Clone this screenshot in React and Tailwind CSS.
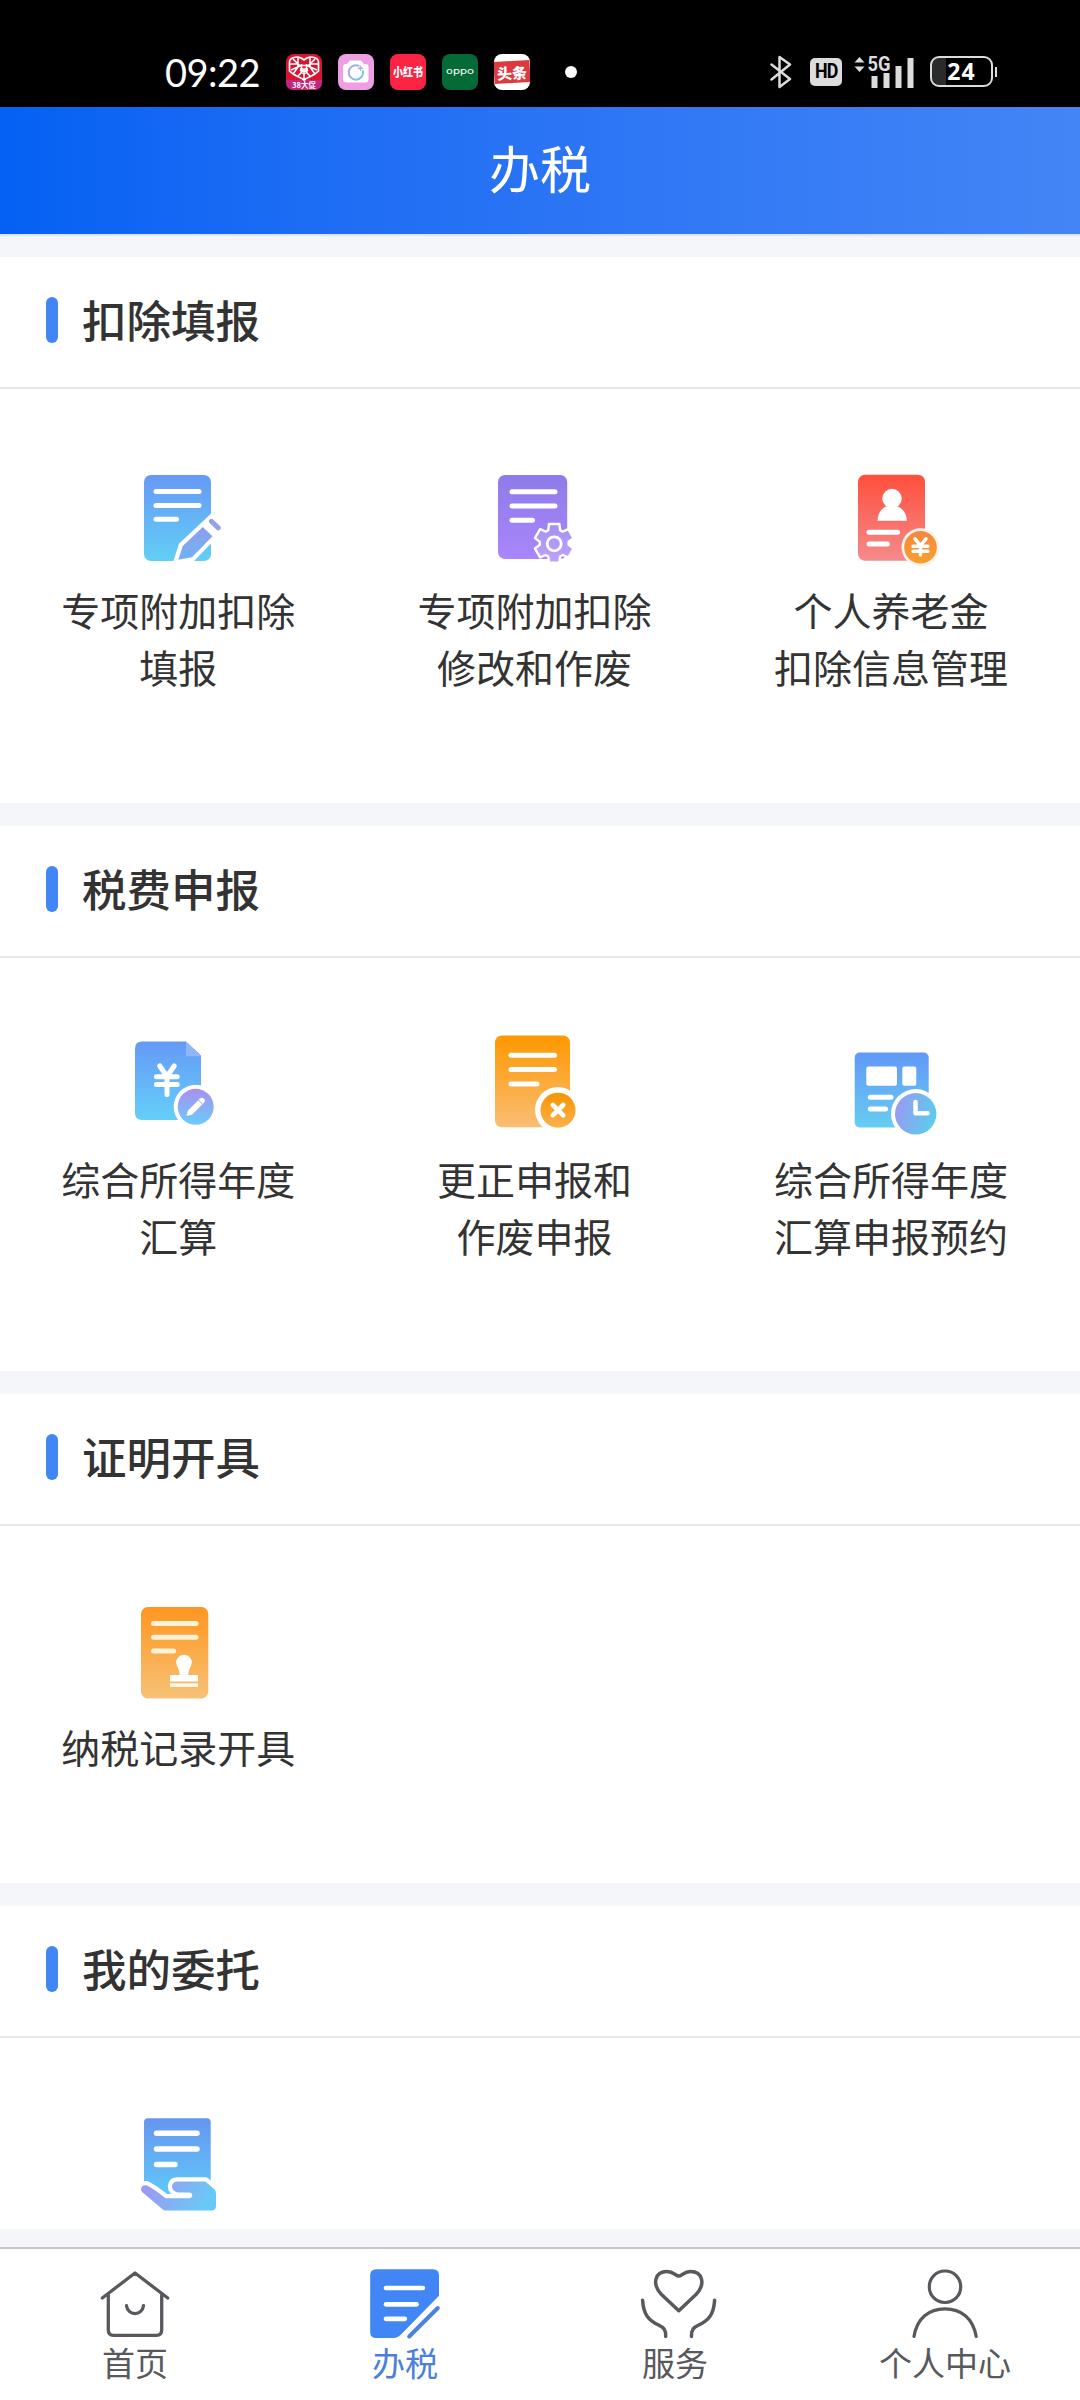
import React from 'react'

const Lines = ({ rows, color = '#fff', width = 5 }) => (
  <g stroke={color} strokeWidth={width} strokeLinecap="round">
    {rows.map(([x1, x2, y]) => (
      <path key={y} d={`M${x1} ${y}H${x2}`} />
    ))}
  </g>
)

const Gradient = ({ id, from, to, diagonal }) => (
  <linearGradient id={id} x1="0" y1="0" x2={diagonal ? '1' : '0'} y2={diagonal ? '0.3' : '1'}>
    <stop offset="0" stopColor={from} />
    <stop offset="1" stopColor={to} />
  </linearGradient>
)

const Icon = ({ children }) => (
  <svg className="w-[120px] h-[120px] overflow-visible" viewBox="0 0 120 120" fill="none">
    {children}
  </svg>
)

const FillReportIcon = () => (
  <Icon>
    <Gradient id="fill" from="#6699f6" to="#62cff5" />
    <Gradient id="pencil" from="#8f9eec" to="#6eb4f3" />
    <rect x="26" y="15" width="67" height="86" rx="7" fill="url(#fill)" />
    <Lines rows={[[38, 81, 31.5], [38, 81, 45.5], [38, 58.5, 59.3]]} />
    <path d="M60.3 99.8L64.7 86 93 59.5 101 69 74 97.2Z" fill="#fff" stroke="#fff" strokeWidth="8.5" />
    <path d="M60.3 99.8L64.7 86 84.8 67 94.5 76.3 74 97.2Z" fill="url(#pencil)" />
    <path d="M93.3 61.3L100.3 67.9" stroke="#9a9feb" strokeWidth="5" strokeLinecap="round" />
  </Icon>
)

const gearPoints = [0, 60, 120, 180, 240, 300]
  .flatMap(a => [[a - 24, 14.5], [a - 15, 20], [a + 15, 20], [a + 24, 14.5]])
  .map(([a, r]) => {
    const t = (a * Math.PI) / 180
    return `${(79.2 + r * Math.sin(t)).toFixed(1)},${(83.3 - r * Math.cos(t)).toFixed(1)}`
  })
  .join(' ')

const ModifyIcon = () => (
  <Icon>
    <Gradient id="modify" from="#8f7bea" to="#a986fb" />
    <Gradient id="gear" from="#a291f1" to="#bfa2fd" />
    <rect x="23" y="15" width="69.2" height="84" rx="7" fill="url(#modify)" />
    <Lines rows={[[37, 80, 31.7], [37, 80, 46], [37, 57.5, 60.3]]} />
    <polygon points={gearPoints} fill="url(#gear)" stroke="#fff" strokeWidth="2.4" strokeLinejoin="round" />
    <circle cx="79.2" cy="83.8" r="7" stroke="#fff" strokeWidth="2.8" />
  </Icon>
)

const PensionIcon = () => (
  <Icon>
    <Gradient id="pension" from="#ff4f3b" to="#f48b8c" />
    <Gradient id="coin" from="#f4873f" to="#fb9f2c" />
    <rect x="27" y="14.7" width="67" height="86" rx="7" fill="url(#pension)" />
    <circle cx="61" cy="38.5" r="9.7" fill="#fff" />
    <path d="M46.6 60.7C46.8 53 50.5 48.5 55.5 46.3H66.5C71.5 48.5 75.5 53 75.8 60.7Z" fill="#fff" />
    <Lines rows={[[38, 66.5, 72.3], [38, 56.3, 84]]} />
    <circle cx="89.5" cy="87.3" r="19" fill="#fff5ec" />
    <circle cx="89.5" cy="87.3" r="16.3" fill="url(#coin)" />
    <path d="M84 78.8L89.5 85.5 95 78.8M89.5 85.5V95M82 86.3H97M82 91.3H97" stroke="#fff" strokeWidth="3.4" strokeLinecap="round" />
  </Icon>
)

const AnnualIcon = () => (
  <Icon>
    <Gradient id="annual" from="#6599f7" to="#65cff8" />
    <Gradient id="annualBadge" from="#ab8eef" to="#68cdf9" />
    <path d="M24 12.5H68L83 26.5V91H24Q17 91 17 84V19.5Q17 12.5 24 12.5Z" fill="url(#annual)" />
    <path d="M68 12.5L83 27.2H68Z" fill="#8fb6fb" />
    <path d="M41.8 37L49 47.5 56.2 37M49 47.5V65.5M38.5 47.7H59.2M38.5 55.4H59.2" stroke="#fff" strokeWidth="5" strokeLinecap="round" />
    <circle cx="77.7" cy="77.8" r="22" fill="#fff" />
    <circle cx="77.7" cy="77.8" r="18" fill="url(#annualBadge)" />
    <path d="M68.5 87L70 81.5 82 69.5Q84 67.8 86 69.8T86 73.8L74 85.8Z" fill="#fff" />
    <path d="M80.5 71L84.6 75.2" stroke="#a99bf0" strokeWidth="1" />
  </Icon>
)

const CorrectIcon = () => (
  <Icon>
    <Gradient id="correct" from="#ff9800" to="#fabd74" />
    <Gradient id="correctBadge" from="#f79400" to="#fcb14c" />
    <rect x="20" y="6.5" width="75" height="91.7" rx="7" fill="url(#correct)" />
    <Lines rows={[[36, 79.5, 26.3], [36, 79.5, 40.6], [36, 62, 54.9]]} />
    <circle cx="83" cy="81" r="23" fill="#fff" />
    <circle cx="83" cy="81.2" r="17.5" fill="url(#correctBadge)" />
    <path d="M77.8 76L88.2 86.4M88.2 76L77.8 86.4" stroke="#fff" strokeWidth="4.6" strokeLinecap="round" />
  </Icon>
)

const BookingIcon = () => (
  <Icon>
    <Gradient id="booking" from="#6298f8" to="#66cdf2" />
    <Gradient id="clock" from="#a095f2" to="#5fc9ee" diagonal />
    <rect x="23.7" y="23.5" width="74" height="75" rx="5" fill="url(#booking)" />
    <rect x="35.3" y="37.5" width="30.7" height="19.3" rx="2" fill="#fff" />
    <rect x="71.3" y="37.5" width="14" height="19.3" rx="2" fill="#fff" />
    <Lines rows={[[39.3, 60, 68.2], [39.3, 54.5, 80]]} />
    <circle cx="84.7" cy="84.8" r="24.7" fill="#fff" />
    <circle cx="84.7" cy="84.8" r="20.7" fill="url(#clock)" />
    <path d="M84.5 73V84.3H96.5" stroke="#fff" strokeWidth="4.5" strokeLinecap="round" strokeLinejoin="round" />
  </Icon>
)

const RecordIcon = () => (
  <Icon>
    <Gradient id="record" from="#ff9620" to="#f7c176" />
    <rect x="23" y="10" width="67.3" height="91.5" rx="7" fill="url(#record)" />
    <Lines rows={[[35.5, 78, 26.5], [35.5, 78, 40.3], [35.5, 55.5, 54]]} color="#fff3d6" />
    <path d="M58.2 65.5A7.8 7.8 0 1 1 73.8 65.5C73.8 70 70.3 71 70.3 78H80V84.5H52V78H61.7C61.7 71 58.2 70 58.2 65.5Z" fill="#fff" />
    <rect x="52" y="86.3" width="28" height="3.7" fill="#fff8e8" />
  </Icon>
)

const palm =
  'M423 866Q424 853 438 854Q448 855 497 893H570Q577 890 577 884T570 876H535Q516 872 516 857Q518 843 532 843H616L644 867Q648 872 648 880V916Q648 930 634 930H492L428 876Q423 872 423 866Z'

const EntrustIcon = () => (
  <Icon>
    <Gradient id="entrust" from="#6695f0" to="#60c9f8" />
    <Gradient id="hand" from="#a592f0" to="#68c9f6" diagonal />
    <path d="M30 9.2H88.7Q92.7 9.2 92.7 13.2V75L84 88H50L26 74V13.2Q26 9.2 30 9.2Z" fill="url(#entrust)" />
    <Lines rows={[[38.5, 79, 24.3], [38.5, 79, 40], [38.5, 57, 55.6]]} width={5.5} />
    <g transform="translate(-118 -208.5) scale(.33333)">
      <path d={palm} stroke="#fff" strokeWidth="25" strokeLinejoin="round" />
      <path d={palm} fill="url(#hand)" />
    </g>
  </Icon>
)

const sections = [
  {
    title: '扣除填报',
    items: [
      { icon: FillReportIcon, label: ['专项附加扣除', '填报'] },
      { icon: ModifyIcon, label: ['专项附加扣除', '修改和作废'] },
      { icon: PensionIcon, label: ['个人养老金', '扣除信息管理'] },
    ],
  },
  {
    title: '税费申报',
    items: [
      { icon: AnnualIcon, label: ['综合所得年度', '汇算'] },
      { icon: CorrectIcon, label: ['更正申报和', '作废申报'] },
      { icon: BookingIcon, label: ['综合所得年度', '汇算申报预约'] },
    ],
  },
  {
    title: '证明开具',
    items: [{ icon: RecordIcon, label: ['纳税记录开具'] }],
  },
  {
    title: '我的委托',
    items: [{ icon: EntrustIcon, label: [] }],
  },
]

const Section = ({ title, items }) => (
  <section className="bg-white shrink-0">
    <div className="h-[132px] border-b-2 border-[#e8e8ea] flex items-center pl-[46px]">
      <span className="w-3 h-[46px] mb-1 rounded-full bg-[#4285f4]"></span>
      <h2 className="ml-6 pb-[5px] text-[44.5px] leading-none font-medium text-[#333]">{title}</h2>
    </div>
    <div className="flex pt-[71px] pb-[107.5px]">
      {items.map(({ icon: ItemIcon, label }, i) => (
        <div key={i} className="w-[356.4px] flex flex-col items-center gap-px">
          <ItemIcon />
          <div className="text-[39px] leading-[57px] text-[#333] text-center">
            {label.map(line => (
              <p key={line}>{line}</p>
            ))}
          </div>
        </div>
      ))}
    </div>
  </section>
)

const StatusBar = () => (
  <div className="h-[107px] bg-black text-white flex items-center pt-[38px] pb-0.5 pl-[165px] shrink-0">
    <span className="w-[121px] font-['Lato'] text-[38px] leading-none tracking-[-0.5px]">09:22</span>
    <div className="flex gap-4">
      <svg className="w-9 h-9 overflow-visible" viewBox="0 0 36 36">
        <rect width="36" height="36" rx="8" fill="#d7152f" />
        <path d="M0 26H36V28Q36 36 28 36H8Q0 36 0 28Z" fill="#c4267f" />
        <path d="M18 6C14 2 4 2 3.500 8V17C8 22 14 23 18 26C22 23 28 22 32.500 17V8C32 2 22 2 18 6Z" fill="#d7152f" stroke="#fff" strokeWidth="1.700" />
        <path d="M7 5L14 12 5 16M12 4V13L7 20M29 5L22 12 31 16M24 4V13L29 20M14 16L18 20 22 16M12 22L18 16 24 22M15.500 10V17M20.500 10V17M14 11.500H22M14 15H22M4 10H12M24 10H32M18 18V25" stroke="#fff" strokeWidth="1.600" fill="none" />
        <text x="18" y="34" textAnchor="middle" fontSize="7.500" fill="#fff" fontWeight="700">38大促</text>
      </svg>
      <svg className="w-9 h-9" viewBox="0 0 36 36" fill="none">
        <Gradient id="lens" from="#b5a3e8" to="#70cbd6" diagonal />
        <rect width="36" height="36" rx="8" fill="#ee9fe3" />
        <path d="M9 10L12 6.500H23L26 10H27.500Q30.500 10 30.500 13V25Q30.500 28.500 27 28.500H8.500Q5 28.500 5 25V13Q5 10 8 10Z" fill="#fff" />
        <path d="M20.500 11.700A7.200 7.200 0 1 0 25 17" stroke="url(#lens)" strokeWidth="2" strokeLinecap="round" />
        <path d="M22.500 11L23.500 13.300 26 14.300 23.500 15.300 22.500 17.600 21.500 15.300 19 14.300 21.500 13.300Z" fill="#c9a7dc" />
      </svg>
      <div className="w-9 h-9 rounded-lg bg-[#fd2343] flex items-center justify-center text-[10px] leading-none font-black whitespace-nowrap">
        <span className="scale-y-120">小红书</span>
      </div>
      <svg className="w-9 h-9 overflow-visible" viewBox="0 0 36 36" fill="none">
        <rect width="36" height="36" rx="8" fill="#046a36" />
        <text x="4" y="19.500" fontFamily="Inter" fontSize="9" textLength="28" lengthAdjust="spacingAndGlyphs" fill="#fff">oppo</text>
      </svg>
      <div className="w-9 h-9 rounded-lg bg-white flex items-center overflow-hidden">
        <div className="w-9 h-[22px] -rotate-3 bg-[#dd3a40] flex items-center justify-center text-[15px] leading-none font-black whitespace-nowrap">头条</div>
      </div>
    </div>
    <span className="w-3 h-3 ml-[35px] rounded-full bg-white"></span>
    <svg className="w-[22px] h-[34px] ml-[193px]" viewBox="0 0 22 34" fill="none">
      <path d="M1.500 9.500L20 24 9.500 32V2L20 9.500 1.500 24.500" stroke="#dcdcdc" strokeWidth="2.500" strokeLinejoin="round" strokeLinecap="round" />
    </svg>
    <span className="w-8 h-7 ml-[18px] rounded-[5px] bg-[#dcdcdc] text-black flex items-center justify-center font-['Roboto'] text-[21px] leading-none font-bold tracking-[-1px]">
      <span className="scale-x-85">HD</span>
    </span>
    <svg className="w-[60px] h-8 ml-3 overflow-visible" viewBox="0 0 60 32" fill="#dcdcdc">
      <path d="M5.500 1L10.500 6.500H.5ZM5.500 16L10.500 10.500H.5Z" />
      <text x="13.500" y="15" fontFamily="Roboto" fontSize="20" fontWeight="700" textLength="23" lengthAdjust="spacingAndGlyphs">5G</text>
      <path d="M17.500 20H23.500V32H17.500ZM29.500 17H35.500V32H29.500ZM41.500 10H47.500V32H41.500ZM53.500 2H59.500V32H53.500Z" />
    </svg>
    <div className="ml-4 flex items-center">
      <div className="w-[63px] h-[31px] rounded-[9px] border-2 border-[#dcdcdc] bg-[linear-gradient(to_right,#2b2b2b_24%,#000_24%)] flex items-center justify-center font-['Open_Sans'] text-[23px] leading-none font-bold tracking-[1px]">24</div>
      <span className="w-0.5 h-2.5 ml-0.5 bg-[#dcdcdc]"></span>
    </div>
  </div>
)

const tabs = [
  {
    name: '首页',
    icon: (
      <g stroke="#58585d" strokeWidth="3.3" strokeLinecap="round" strokeLinejoin="round">
        <path d="M12.3 38L45 13 77.7 38M18.3 35V70Q18.3 75.3 23.5 75.3H66.5Q71.7 75.3 71.7 70V35" />
        <path d="M36.5 45.7C38 56.2 52 56.2 53.5 45.7" />
      </g>
    ),
  },
  {
    name: '办税',
    active: true,
    icon: (
      <>
        <path d="M16.2 9.3H73Q79 9.3 79 15.3V35.7L42 73.5Q37.5 78 33.5 78H16.2Q10.2 78 10.2 72V15.3Q10.2 9.3 16.2 9.3Z" fill="#4285f4" />
        <Lines rows={[[26, 62.8, 28], [26, 56.5, 44.3], [26, 44.8, 58.8]]} width={4.7} />
        <path d="M49.2 76.5L77.8 48" stroke="#4a82dd" strokeWidth="4" strokeLinecap="round" />
      </>
    ),
  },
  {
    name: '服务',
    icon: (
      <g stroke="#58585d" strokeWidth="3.5" strokeLinecap="round" strokeLinejoin="round">
        <path d="M48.8 50.7L31.5 34.5C21.5 24 25 11.5 37 11.5C43.5 11.5 46 16 48.8 16S54 11.5 60.5 11.5C72.5 11.5 76 24 66 34.5Z" />
        <path d="M12.6 40.3C13.5 55 19 60.5 28.5 65C33.5 67.3 36 69.5 35.7 76.5M84.6 40.3C83.7 55 78.2 60.5 68.7 65C63.7 67.3 61.2 69.5 61.5 76.5" />
      </g>
    ),
  },
  {
    name: '个人中心',
    icon: (
      <g stroke="#58585d" strokeWidth="3.2" strokeLinecap="round">
        <rect x="29.3" y="11" width="31.4" height="31.5" rx="15.5" />
        <path d="M14 76.5C17 58 29 48.8 45 48.8S73 58 76.2 76.5" />
      </g>
    ),
  },
]

const TabBar = () => (
  <nav className="h-[153px] bg-white border-t-2 border-[#c6c6ca] grid grid-cols-4 pt-[11px] shrink-0">
    {tabs.map(tab => (
      <div key={tab.name} className="flex flex-col items-center">
        <svg className="w-[90px] h-[84px]" viewBox="0 0 90 84" fill="none">
          {tab.icon}
        </svg>
        <span className={tab.active ? 'text-[33px] leading-[37px] text-[#4a80d8]' : 'text-[33px] leading-[37px] text-[#58585d]'}>
          {tab.name}
        </span>
      </div>
    ))}
  </nav>
)

const App = () => {
  return (
    <div className="w-[1080px] h-[2400px] overflow-hidden bg-[#f5f6fa] flex flex-col font-['Noto_Sans_CJK_SC',sans-serif]">
      <StatusBar />
      <header className="h-[127px] shrink-0 bg-linear-to-r from-[#0361f3] to-[#4385f6] flex items-center justify-center">
        <h1 className="pb-[6px] text-[51px] leading-none text-white">办税</h1>
      </header>
      <main className="h-[2013px] shrink-0 overflow-hidden border-t-2 border-[#dfe3f0] pt-[21px] flex flex-col gap-[23px]">
        {sections.map(section => (
          <Section key={section.title} title={section.title} items={section.items} />
        ))}
      </main>
      <div className="h-[18px] -mt-[18px] relative bg-[#f5f6fa] shrink-0"></div>
      <TabBar />
    </div>
  )
}

export default App
